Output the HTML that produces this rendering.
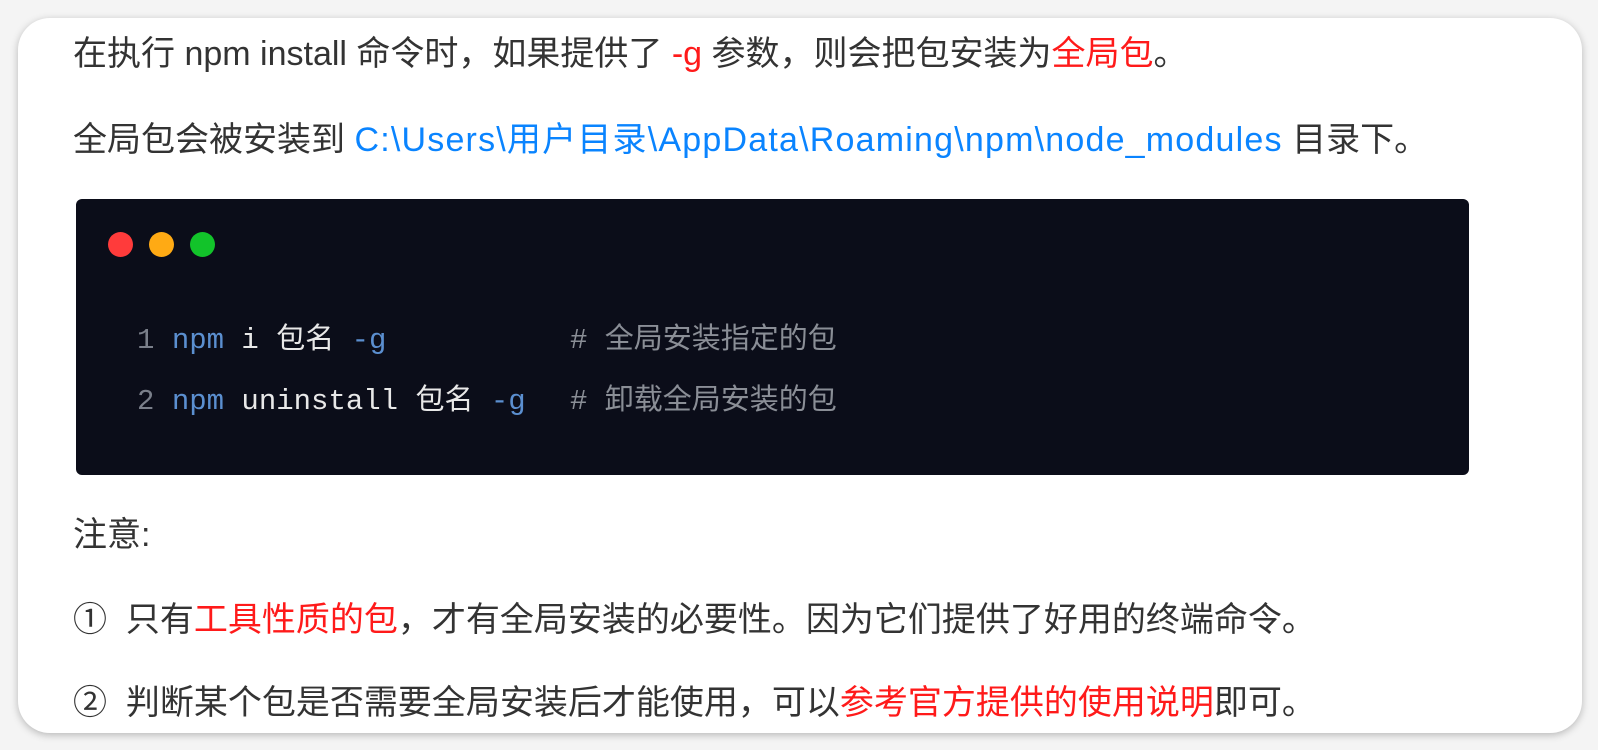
<!DOCTYPE html>
<html><head><meta charset="utf-8"><style>
html,body{margin:0;padding:0;background:#f4f4f4;width:1598px;height:750px;overflow:hidden}
.card{position:absolute;left:18px;top:18px;width:1564px;height:715px;background:#fff;border-radius:32px;box-shadow:0 2px 8px rgba(0,0,0,.25)}
.t{position:absolute;left:73px;font-family:"Liberation Sans","Noto Sans CJK SC",sans-serif;font-size:34px;color:#333;white-space:nowrap;line-height:40px}
.r{color:#ff1a1a}.b{color:#0a84ff;letter-spacing:1.2px}
.code{position:absolute;left:76px;top:199px;width:1393px;height:276px;background:#0b0d19;border-radius:6px}
.dot{position:absolute;top:232px;width:25px;height:25px;border-radius:50%}
.c{position:absolute;font-family:"Liberation Mono","Noto Sans CJK SC",monospace;font-size:29px;line-height:36px;white-space:pre;color:#e8e8e8}
.n{color:#7a7f8a}.k{color:#5b8fd0}.g{color:#8a8e96}
</style></head><body>
<div class="card"></div>
<div class="t" style="top:34px">在执行 npm install 命令时，如果提供了 <span class="r">-g</span> 参数，则会把包安装为<span class="r">全局包</span>。</div>
<div class="t" style="top:120px">全局包会被安装到 <span class="b">C:\Users\用户目录\AppData\Roaming\npm\node_modules</span> 目录下。</div>
<div class="code"></div>
<div class="dot" style="left:108px;background:#ff3b3b"></div>
<div class="dot" style="left:149px;background:#ffaa14"></div>
<div class="dot" style="left:190px;background:#12c32a"></div>
<div class="c" style="left:137px;top:323px"><span class="n">1</span> <span class="k">npm</span> i 包名 <span class="k">-g</span></div>
<div class="c" style="left:570px;top:323px"><span class="g"># 全局安装指定的包</span></div>
<div class="c" style="left:137px;top:384px"><span class="n">2</span> <span class="k">npm</span> uninstall 包名 <span class="k">-g</span></div>
<div class="c" style="left:570px;top:384px"><span class="g"># 卸载全局安装的包</span></div>
<div class="t" style="top:515px">注意:</div>
<div class="t" style="top:600px">①&nbsp;&nbsp;只有<span class="r">工具性质的包</span>，才有全局安装的必要性。因为它们提供了好用的终端命令。</div>
<div class="t" style="top:683px">②&nbsp;&nbsp;判断某个包是否需要全局安装后才能使用，可以<span class="r">参考官方提供的使用说明</span>即可。</div>
</body></html>
